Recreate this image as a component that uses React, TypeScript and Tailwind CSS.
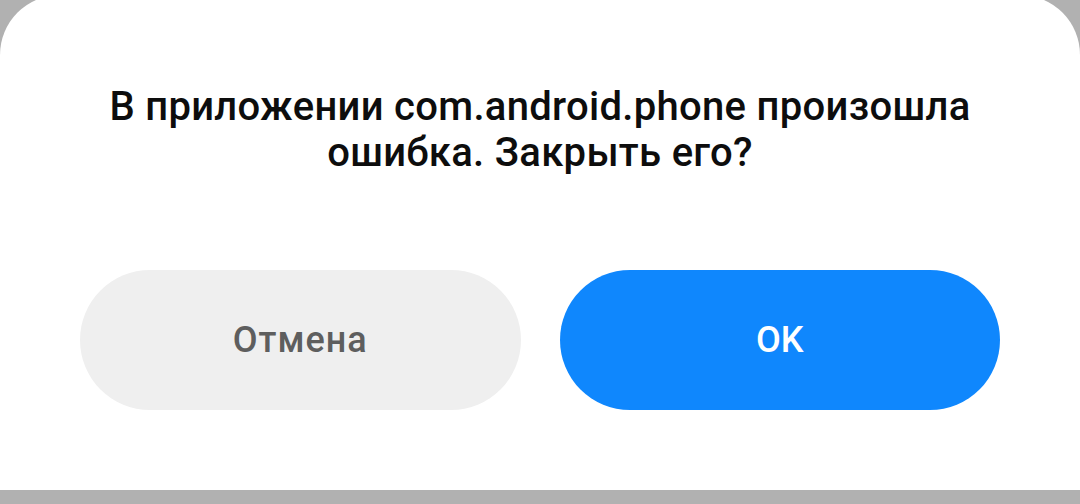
export default function App() {
  return (
    <div className="flex h-[504px] w-[1080px] flex-col overflow-hidden bg-[#b1b1b1] font-['Roboto',sans-serif]">
      <div className="-mt-[5px] flex h-[495px] flex-col rounded-t-[60px] bg-white">
        <p className="px-[90px] pt-[89px] text-center text-[40px] leading-[46px] font-medium tracking-[0.3px] text-[#0d0d0d]">
          В приложении com.android.phone произошла ошибка. Закрыть его?
        </p>
        <div className="mt-[94px] flex gap-[39px] px-[80px]">
          <button className="flex h-[140px] flex-1 items-center justify-center rounded-full bg-[#efefef] text-[36px] font-medium tracking-[1px] text-[#5e5e5e]">
            Отмена
          </button>
          <button className="flex h-[140px] flex-1 items-center justify-center rounded-full bg-[#0f87fd] text-[36px] font-medium text-white">
            OK
          </button>
        </div>
      </div>
    </div>
  )
}
